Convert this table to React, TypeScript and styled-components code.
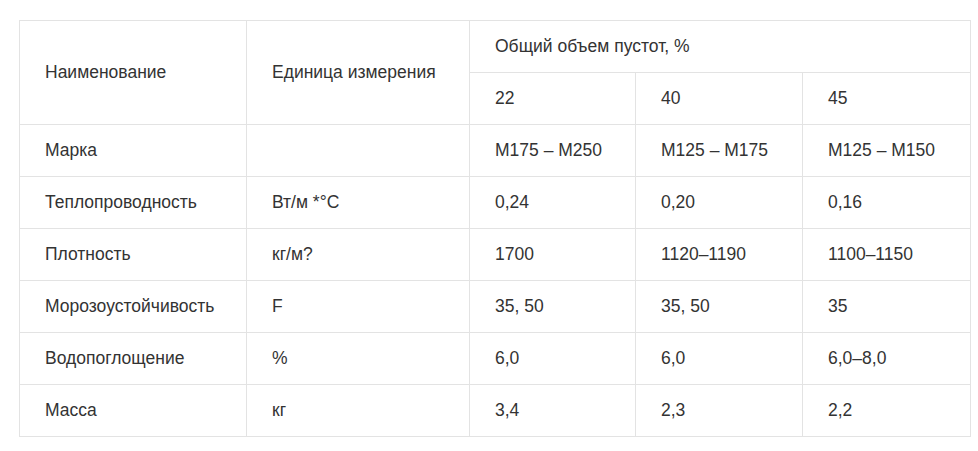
import styled, { createGlobalStyle } from "styled-components";

const Global = createGlobalStyle`
    body {
        margin: 0;
        background: #fff;
        font-family: "Liberation Sans", Arial, sans-serif;
    }
`;

const Page = styled.div`
    padding: 20px 0 0 19px;
`;

const Table = styled.table`
    border-collapse: collapse;
    table-layout: fixed;
    width: 951px;
    font-size: 17.5px;
    color: #333;
`;

const Col = styled.col<{ $width: number }>`
    width: ${p => p.$width}px;
`;

const Cell = styled.td`
    border: 1px solid #e3e3e3;
    height: 51px;
    padding: 0 0 0 25px;
    vertical-align: middle;
    text-align: left;
    font-weight: normal;
    white-space: nowrap;
`;

const widths = [227, 223, 166, 167, 168];

const rows: string[][] = [
    ["Марка", "", "М175 – М250", "М125 – М175", "М125 – М150"],
    ["Теплопроводность", "Вт/м *°С", "0,24", "0,20", "0,16"],
    ["Плотность", "кг/м?", "1700", "1120–1190", "1100–1150"],
    ["Морозоустойчивость", "F", "35, 50", "35, 50", "35"],
    ["Водопоглощение", "%", "6,0", "6,0", "6,0–8,0"],
    ["Масса", "кг", "3,4", "2,3", "2,2"],
];

export default function App () {
    return <Page>
        <Global />
        <Table>
            <colgroup>
                {widths.map((w, i) => <Col key={i} $width={w} />)}
            </colgroup>
            <tbody>
                <tr>
                    <Cell rowSpan={2}>Наименование</Cell>
                    <Cell rowSpan={2}>Единица измерения</Cell>
                    <Cell colSpan={3}>Общий объем пустот, %</Cell>
                </tr>
                <tr>
                    <Cell>22</Cell>
                    <Cell>40</Cell>
                    <Cell>45</Cell>
                </tr>
                {rows.map(row => <tr key={row[0]}>
                    {row.map((value, i) => <Cell key={i}>{value}</Cell>)}
                </tr>)}
            </tbody>
        </Table>
    </Page>;
}
